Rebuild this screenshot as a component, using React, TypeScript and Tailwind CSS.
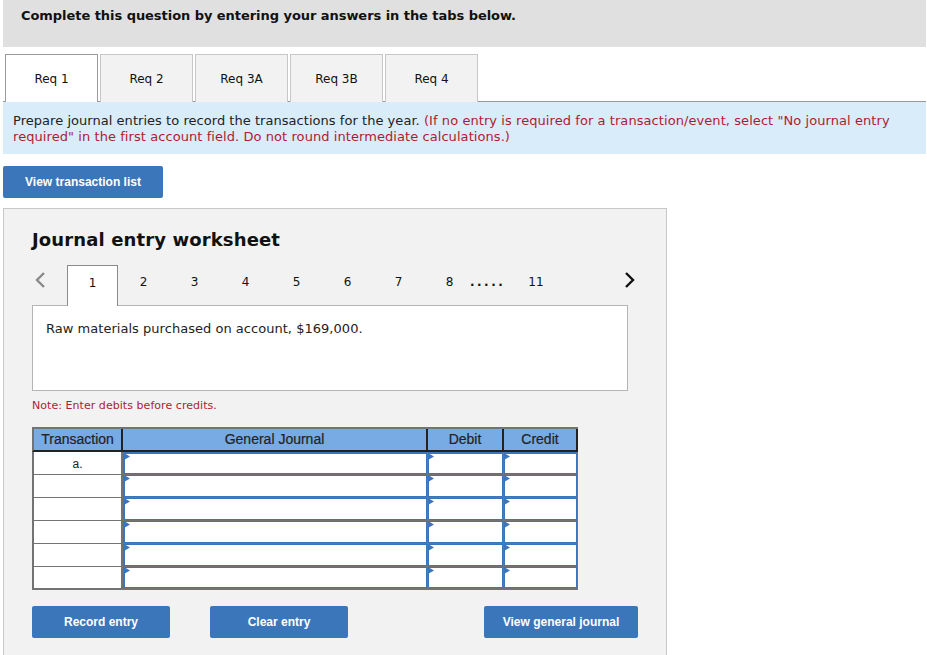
const verdana = "font-['DejaVu_Sans',Verdana,sans-serif]";

function Marker() {
  return (
    <svg className="absolute -left-[1px] -top-[1px]" width="6" height="7" viewBox="0 0 6 7">
      <path d="M0 0 L6 3.5 L0 7 Z" fill="#3b76ba" />
    </svg>
  );
}

function InputCell({ className, first, wide, end }: { className: string; first: boolean; wide?: boolean; end?: boolean }) {
  return (
    <div className={`h-full shrink-0 border-[#737373] ${wide ? "" : "border-l"} ${end ? "border-r" : ""} ${className}`}>
      <div
        className={`relative h-full bg-white border-[#3b76ba] border-b border-r ${wide ? "border-l-2" : "border-l"} ${first ? "border-t-2" : "border-t"}`}
      >
        <Marker />
      </div>
    </div>
  );
}

function Row({ label, index, last }: { label: string; index: number; last: boolean }) {
  const base = last ? "border-b-2" : "border-b";
  return (
    <div className="flex h-[23px]">
      <div className={`w-[91px] shrink-0 bg-white border-l-2 border-r-2 border-[#737373] ${base} text-center text-[12px] leading-[24px] text-[#222]`}>
        {label}
      </div>
      <InputCell className={`w-[304px] ${base}`} first={index === 0} wide />
      <InputCell className={`w-[76px] ${base}`} first={index === 0} />
      <InputCell className={`w-[75px] ${base}`} first={index === 0} end />
    </div>
  );
}

function Tab({ label, active }: { label: string; active?: boolean }) {
  return (
    <div
      className={`w-[93px] h-[48px] flex items-center justify-center text-[12px] text-[#111] border border-b-0 ${
        active ? "bg-white border-[#9a9a9a] relative z-10" : "bg-[#f2f2f2] border-[#c6c6c6]"
      }`}
    >
      {label}
    </div>
  );
}

function ActionButton({ label, className }: { label: string; className: string }) {
  return (
    <div
      className={`h-[32px] shrink-0 flex items-center justify-center rounded-[2px] bg-[#3b76ba] text-white text-[12px] font-bold font-['Liberation_Sans',Arial,sans-serif] ${className}`}
    >
      {label}
    </div>
  );
}

export default function App() {
  const rows = ["a.", "", "", "", "", ""];
  const pages = ["2", "3", "4", "5", "6", "7"];
  const headCell = "shrink-0 border-r-2 border-[#222] text-center [-webkit-text-stroke:0.2px_#222]";
  return (
    <div className={`w-[927px] h-[655px] overflow-hidden bg-white ${verdana}`}>
      <div className="ml-[3px] w-[923px] h-[47px] bg-[#e0e0e0] pl-[18px] pt-[6px] text-[13px] leading-[20px] font-bold tracking-[-0.05px] text-[#111]">
        Complete this question by entering your answers in the tabs below.
      </div>

      <div className="mt-[7px] ml-[5px] flex gap-[2px]">
        <Tab label="Req 1" active />
        <Tab label="Req 2" />
        <Tab label="Req 3A" />
        <Tab label="Req 3B" />
        <Tab label="Req 4" />
      </div>

      <div className="ml-[3px] w-[923px] -mt-[1px] h-[53px] bg-[#d9ecfa] border-t border-[#9a9a9a] pl-[10px] pr-[10px] pt-[11px] text-[13px] leading-[16px] tracking-[0.04px] text-[#222]">
        Prepare journal entries to record the transactions for the year.{" "}
        <span className="text-[#b01c2e] tracking-[0.07px]">
          (If no entry is required for a transaction/event, select "No journal entry required" in the first account field. Do not round intermediate calculations.)
        </span>
      </div>

      <ActionButton label="View transaction list" className="ml-[3px] mt-[12px] w-[160px]" />

      <div className="ml-[3px] mt-[10px] w-[664px] h-[460px] bg-[#f2f2f2] border border-[#c8c8c8] pl-[28px]">
        <div className="mt-[19px] text-[18px] leading-[24px] font-bold tracking-[0.13px] text-[#111]">Journal entry worksheet</div>

        <div className="mt-[13px] h-[40px] flex items-start text-[12px] text-[#111] relative">
          <svg className="absolute left-[2px] top-[6px]" width="12" height="18" viewBox="0 0 12 18">
            <path d="M10 2 L3 9 L10 16" fill="none" stroke="#8a8a8a" strokeWidth="2.4" />
          </svg>
          <div className="ml-[35px] w-[51px] h-[41px] bg-white border border-b-0 border-[#8a8a8a] relative z-10 flex items-center justify-center pb-[7px]">
            1
          </div>
          {pages.map((p) => (
            <div key={p} className="w-[51px] h-[34px] flex items-center justify-center">
              {p}
            </div>
          ))}
          <div className="w-[51px] h-[34px] flex items-center justify-center">8</div>
          <div className="-ml-[5px] w-[44px] h-[34px] flex items-center font-bold tracking-[2.5px] text-[12px]">.....</div>
          <div className="ml-[2px] w-[40px] h-[34px] flex items-center justify-center">11</div>
          <svg className="absolute left-[592px] top-[6px]" width="12" height="18" viewBox="0 0 12 18">
            <path d="M2 2 L9 9 L2 16" fill="none" stroke="#111" strokeWidth="2.4" />
          </svg>
        </div>

        <div className="w-[596px] h-[86px] bg-white border border-[#b5b5b5] pl-[13px] pt-[14px] text-[13px] leading-[18px] tracking-[0.03px] text-[#222]">
          Raw materials purchased on account, $169,000.
        </div>

        <div className="mt-[8px] text-[11px] leading-[14px] tracking-[0.05px] text-[#b01c2e]">Note: Enter debits before credits.</div>

        <div className="mt-[14px] w-[546px] font-['Liberation_Sans',Arial,sans-serif]">
          <div className="flex h-[25px] bg-[#78aae4] border-t-2 border-[#737373] border-l-2 border-b-2 border-b-[#222] text-[14px] leading-[21px] text-[#222]">
            <div className={`w-[89px] ${headCell}`}>Transaction</div>
            <div className={`w-[305px] ${headCell}`}>General Journal</div>
            <div className={`w-[76px] ${headCell}`}>Debit</div>
            <div className={`w-[74px] ${headCell}`}>Credit</div>
          </div>
          {rows.map((r, i) => (
            <Row key={i} label={r} index={i} last={i === rows.length - 1} />
          ))}
        </div>

        <div className="mt-[16px] flex w-[606px]">
          <ActionButton label="Record entry" className="w-[138px]" />
          <ActionButton label="Clear entry" className="ml-[40px] w-[138px]" />
          <ActionButton label="View general journal" className="ml-auto w-[154px]" />
        </div>
      </div>
    </div>
  );
}
